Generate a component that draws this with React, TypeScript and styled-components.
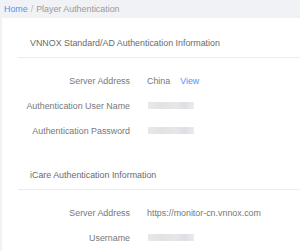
import React from "react";
import styled, { createGlobalStyle } from "styled-components";

const GlobalStyle = createGlobalStyle`
    body {
        margin: 0;
        background: #f0f2f5;
        font-family: "Liberation Sans", Arial, sans-serif;
        font-size: 8.9px;
        color: #777;
    }
`;

type Row = { label: string; value?: string; link?: string; masked?: boolean };

type Section = { title: string; rows: Array<Row> };

const sections: Array<Section> = [
    {
        title: "VNNOX Standard/AD Authentication Information",
        rows: [
            { label: "Server Address", value: "China", link: "View" },
            { label: "Authentication User Name", masked: true },
            { label: "Authentication Password", masked: true },
        ],
    },
    {
        title: "iCare Authentication Information",
        rows: [
            { label: "Server Address", value: "https://monitor-cn.vnnox.com" },
            { label: "Username", masked: true },
        ],
    },
];

export default function App() {
    return (
        <>
            <GlobalStyle />
            <Breadcrumb>
                <Crumb $active>Home</Crumb>
                <Sep>/</Sep>
                <Crumb>Player Authentication</Crumb>
            </Breadcrumb>
            <Card>
                {sections.map((section, i) => (
                    <SectionBox key={section.title} $first={i === 0}>
                        <SectionTitle>{section.title}</SectionTitle>
                        <Rows>
                            {section.rows.map((row) => (
                                <FieldRow key={row.label}>
                                    <Label>{row.label}</Label>
                                    <Value>
                                        {row.masked ? <Masked /> : row.value}
                                        {row.link && <Link>{row.link}</Link>}
                                    </Value>
                                </FieldRow>
                            ))}
                        </Rows>
                    </SectionBox>
                ))}
            </Card>
        </>
    );
}

const Breadcrumb = styled.div`
    height: 18px;
    display: flex;
    align-items: center;
    padding-left: 4px;
`;

const Crumb = styled.span<{ $active?: boolean }>`
    color: ${props => props.$active ? "#4d96f2" : "#9a9a9a"};
`;

const Sep = styled.span`
    margin: 0 3px;
    color: #b8b8b8;
`;

const Card = styled.div`
    margin-left: 2px;
    background: #fff;
    padding-left: 16px;
    min-height: 233px;
`;

const SectionBox = styled.div<{ $first: boolean }>`
    padding-top: ${props => props.$first ? "18px" : "25px"};
`;

const SectionTitle = styled.div`
    line-height: 14px;
    padding: 0 0 7px 12px;
    border-bottom: 1px solid #ebebf1;
    color: #6a6a6a;
`;

const Rows = styled.div`
    padding-top: 10px;
    display: grid;
`;

const FieldRow = styled.div`
    display: grid;
    grid-template-columns: 112px 1fr;
    column-gap: 17px;
    height: 25px;
    align-items: center;
`;

const Label = styled.div`
    text-align: right;
    color: #777;
`;

const Value = styled.div`
    display: flex;
    align-items: center;
    color: #777;
`;

const Link = styled.span`
    margin-left: 10px;
    color: #4d96f2;
`;

const Masked = styled.span`
    display: block;
    width: 46px;
    height: 7px;
    margin-left: 1px;
    background: linear-gradient(90deg, #e9e9ec 0%, #e2e2e5 30%, #e7e7ea 60%, #dfdfe3 80%, #ececef 100%);
    filter: blur(0.6px);
`;
